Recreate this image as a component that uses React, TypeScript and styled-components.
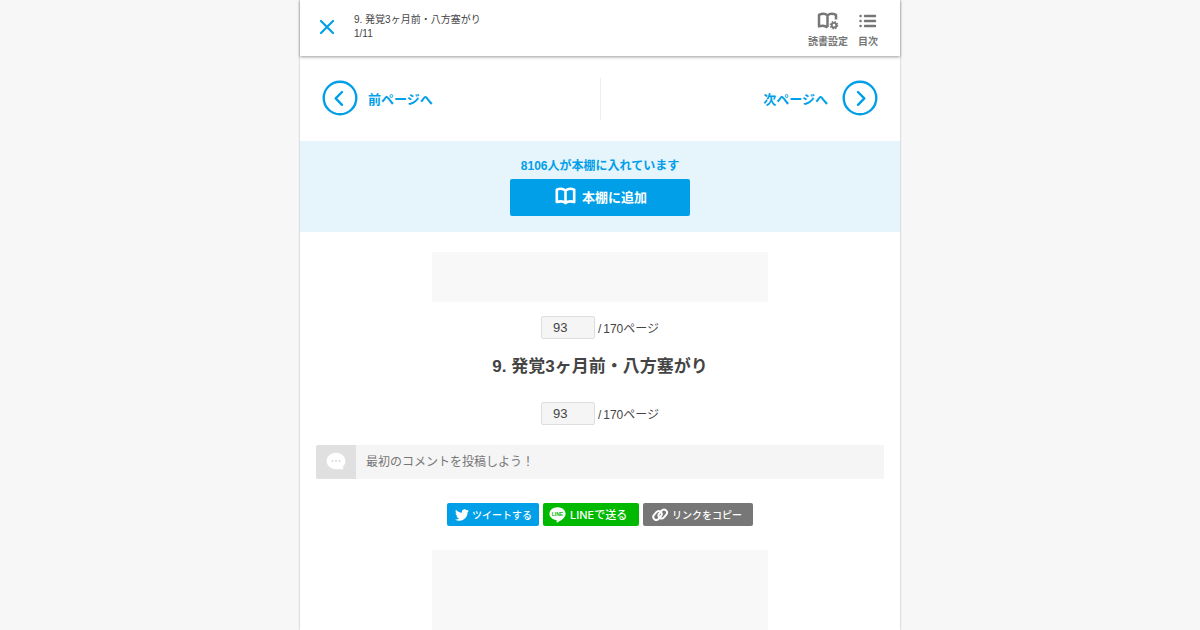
import React from "react";
import styled, { createGlobalStyle, css } from "styled-components";
import { FaTwitter } from "react-icons/fa";

const GlobalStyle = createGlobalStyle`
  *, *::before, *::after { box-sizing: border-box; }
  body {
    margin: 0;
    background: #f7f7f7;
    color: #444;
    font-family: "Liberation Sans", "Noto Sans CJK JP", sans-serif;
    font-size: 12px;
  }
  button, input { font-family: inherit; }
  svg { display: block; flex: none; }
`;

const Page = styled.div`
  display: flex;
  flex-direction: column;
  max-width: 600px;
  min-height: 100vh;
  margin: 0 auto;
  background: #fff;
  box-shadow: 0 0 2px rgba(0, 0, 0, 0.3);
`;

const Header = styled.header`
  display: flex;
  align-items: center;
  height: 56px;
  padding: 0 22px 2px 20px;
  background: #fff;
  box-shadow: 0 1px 3px rgba(0, 0, 0, 0.4);
`;

const PlainButton = styled.button`
  padding: 0;
  border: 0;
  background: none;
  cursor: pointer;
`;

const CloseButton = styled(PlainButton)`
  margin-right: 20px;
  color: #009fe8;
`;

const Chapter = styled.div`
  flex: 1;
  font-size: 10px;
  line-height: 14px;
`;

const Tools = styled.div`
  display: flex;
  gap: 10px;
  padding-top: 8px;
`;

const ToolButton = styled(PlainButton)`
  display: flex;
  flex-direction: column;
  align-items: center;
  gap: 4px;
  color: #777;
  font-size: 10px;
  font-weight: bold;
  line-height: 16px;
`;

const Pager = styled.nav`
  display: flex;
  align-items: center;
  height: 85px;
`;

const PagerLink = styled.a<{ $next?: boolean }>`
  display: flex;
  flex: 1;
  flex-direction: ${(p) => (p.$next ? "row-reverse" : "row")};
  align-items: center;
  gap: ${(p) => (p.$next ? 14 : 10)}px;
  height: 42px;
  padding: 0 22px;
  color: #009fe8;
  font-size: 13px;
  font-weight: bold;
  text-decoration: none;
  ${(p) => p.$next && css`border-left: 1px solid #eee;`}
  svg { margin-bottom: 2px; }
`;

const Shelf = styled.section`
  display: flex;
  flex-direction: column;
  align-items: center;
  gap: 3px;
  padding: 15px 0 16px;
  background: #e6f4fc;
`;

const ShelfCount = styled.p`
  margin: 0;
  color: #009fe8;
  font-weight: bold;
  line-height: 20px;
`;

const ShelfButton = styled.button`
  display: flex;
  align-items: center;
  justify-content: center;
  gap: 6px;
  width: 180px;
  height: 37px;
  padding: 0 0 3px 2px;
  border: 0;
  border-radius: 2px;
  background: #009fe8;
  color: #fff;
  font-size: 13px;
  font-weight: bold;
  cursor: pointer;
`;

const Main = styled.main`
  display: flex;
  flex: 1;
  flex-direction: column;
  align-items: center;
  padding-top: 20px;
`;

const AdSlot = styled.div<{ $fill?: boolean }>`
  width: 336px;
  max-width: 100%;
  background: #f8f8f8;
  ${(p) => (p.$fill ? css`flex: 1; min-height: 80px;` : css`height: 50px; margin-bottom: 14px;`)}
`;

const PageJump = styled.form`
  display: flex;
  align-items: center;
  gap: 3px;
  height: 23px;
`;

const PageInput = styled.input`
  width: 54px;
  height: 23px;
  padding: 0 11px;
  border: 1px solid #ddd;
  border-radius: 2px;
  background: #f5f5f5;
  color: #444;
  font-size: 13px;
`;

const PageTotal = styled.label`
  display: flex;
  gap: 2px;
  padding-top: 2px;
  line-height: 22px;
`;

const Title = styled.h1`
  margin: 15px 0 22px;
  font-size: 17px;
  line-height: 26px;
`;

const CommentBar = styled.a`
  display: flex;
  align-self: stretch;
  align-items: center;
  height: 34px;
  margin: 20px 16px 24px;
  border-radius: 2px;
  overflow: hidden;
  background: #f5f5f5;
  color: #777;
  line-height: 34px;
  text-decoration: none;
`;

const CommentIcon = styled.span`
  display: flex;
  align-items: center;
  justify-content: center;
  width: 40px;
  height: 34px;
  padding-bottom: 2px;
  margin-right: 10px;
  background: #e0e0e0;
`;

const CommentPrompt = styled.span`
  height: 34px;
`;

const ShareList = styled.div`
  display: flex;
  gap: 4px;
  margin-bottom: 24px;
`;

const ShareButton = styled.button<{ $color: string; $width: number; $line?: boolean }>`
  display: flex;
  align-items: center;
  gap: ${(p) => (p.$line ? 4 : 3)}px;
  width: ${(p) => p.$width}px;
  height: 23px;
  padding: 0 0 0 ${(p) => (p.$line ? 6 : 8)}px;
  border: 0;
  border-radius: 2px;
  background: ${(p) => p.$color};
  color: #fff;
  font-family: Inter, "Noto Sans CJK JP", sans-serif;
  font-size: ${(p) => (p.$line ? 11 : 10)}px;
  font-weight: 500;
  line-height: 22px;
  white-space: nowrap;
  cursor: pointer;
`;

const CloseIcon = () => (
  <svg width="14" height="14" viewBox="0 0 14 14" stroke="currentColor" strokeWidth="2.2" strokeLinecap="round">
    <path d="M1 1L13 13M13 1L1 13" />
  </svg>
);

const BookIcon = () => (
  <svg width="21" height="18" viewBox="0 0 21 18" fill="none" stroke="currentColor" strokeWidth="2.6" strokeLinejoin="round">
    <path d="M10.5 3.6C8.5 1.7 5 1.3 1.8 2.6V15C5 14 8.5 14.2 10.5 16.2C12.5 14.2 16 14 19.2 15V2.6C16 1.3 12.5 1.7 10.5 3.6ZM10.5 3.6V16" />
  </svg>
);

const BookGearIcon = () => (
  <svg width="22" height="18" viewBox="0 0 22 18" fill="none" stroke="currentColor">
    <path strokeWidth="2.5" strokeLinejoin="round" d="M10.5 15.6C8.5 13.8 5 13.4 2 14.4V2.8C5 1.3 8.5 1.5 10.5 3.4C12.5 1.5 16 1.3 19 2.8V7.5M10.5 3.4V15" />
    <circle cx="17" cy="13.2" r="2.3" strokeWidth="1.9" />
    <circle cx="17" cy="13.2" r="3.6" strokeWidth="1.4" strokeDasharray="1.5 1.33" />
  </svg>
);

const ListIcon = () => (
  <svg width="18" height="18" viewBox="0 0 18 18" stroke="currentColor" strokeWidth="2.5" strokeLinecap="round">
    <path d="M1.500 4H1.600M1.500 9H1.600M1.500 14H1.600M6 4H16M6 9H16M6 14H16" />
  </svg>
);

const CircleArrow = ({ next }: { next?: boolean }) => (
  <svg width="36" height="36" viewBox="0 0 36 36" fill="none" stroke="currentColor" strokeWidth="2.4">
    <circle cx="18" cy="18" r="16.3" />
    <path strokeLinecap="round" strokeLinejoin="round" d={next ? "M16 12L22.3 18.4L16 24.8" : "M20 12L13.7 18.4L20 24.8"} />
  </svg>
);

const BubbleIcon = () => (
  <svg width="20" height="18" viewBox="0 0 20 18">
    <path fill="#fff" d="M10 .8C4.700 .8 .6 4.400 .6 9S4.700 17.200 10 17.200H16.600C17.500 17.200 17.500 16.400 17 15.800L16.700 14.800C18.400 13.400 19.400 11.400 19.400 9C19.400 4.400 15.300 .8 10 .8Z" />
    <g fill="#d8d8d8">
      <circle cx="6.5" cy="9" r="1" />
      <circle cx="10" cy="9" r="1" />
      <circle cx="13.5" cy="9" r="1" />
    </g>
  </svg>
);

const LineIcon = () => (
  <svg width="17" height="16" viewBox="0 0 17 16">
    <path fill="#fff" d="M8.500 .3C3.900 .3 .4 3.200 .4 6.700C.4 9.900 3.300 12.400 7.100 13C7.900 13.200 7.700 13.900 7.500 15.100C7.500 15.600 7.900 15.700 8.400 15.400C11 14 16.600 10.900 16.600 6.700C16.600 3.200 13.100 .3 8.500 .3Z" />
    <text x="8.5" y="8.6" textAnchor="middle" fill="#00b900" fontFamily="Liberation Sans, sans-serif" fontSize="5" fontWeight="bold">LINE</text>
  </svg>
);

const ChainIcon = () => (
  <svg width="18" height="16" viewBox="0 0 18 16" fill="none" stroke="#fff" strokeWidth="2">
    <rect x="-4.8" y="-3" width="9.6" height="6" rx="3" transform="translate(6.5 8.5) rotate(-50)" />
    <rect x="-4.8" y="-3" width="9.6" height="6" rx="3" transform="translate(11.8 7) rotate(-50)" />
  </svg>
);

const PageSelector = ({ id }: { id: string }) => (
  <PageJump onSubmit={(e) => e.preventDefault()}>
    <PageInput id={id} defaultValue="93" inputMode="numeric" />
    <PageTotal htmlFor={id}>
      <span>/</span>
      <span>170ページ</span>
    </PageTotal>
  </PageJump>
);

export default function App() {
  return (
    <>
      <GlobalStyle />
      <Page>
        <Header>
          <CloseButton type="button" aria-label="閉じる"><CloseIcon /></CloseButton>
          <Chapter>
            <div>9. 発覚3ヶ月前・八方塞がり</div>
            <div>1/11</div>
          </Chapter>
          <Tools>
            <ToolButton type="button"><BookGearIcon />読書設定</ToolButton>
            <ToolButton type="button"><ListIcon />目次</ToolButton>
          </Tools>
        </Header>
        <Pager>
          <PagerLink href="#prev"><CircleArrow />前ページへ</PagerLink>
          <PagerLink href="#next" $next><CircleArrow next />次ページへ</PagerLink>
        </Pager>
        <Shelf>
          <ShelfCount>8106人が本棚に入れています</ShelfCount>
          <ShelfButton type="button"><BookIcon />本棚に追加</ShelfButton>
        </Shelf>
        <Main>
          <AdSlot />
          <PageSelector id="page-top" />
          <Title>9. 発覚3ヶ月前・八方塞がり</Title>
          <PageSelector id="page-bottom" />
          <CommentBar href="#comment">
            <CommentIcon><BubbleIcon /></CommentIcon>
            <CommentPrompt>最初のコメントを投稿しよう！</CommentPrompt>
          </CommentBar>
          <ShareList>
            <ShareButton type="button" $color="#009fe8" $width={92}><FaTwitter size={14} />ツイートする</ShareButton>
            <ShareButton type="button" $color="#00b900" $width={96} $line><LineIcon />LINEで送る</ShareButton>
            <ShareButton type="button" $color="#777" $width={110}><ChainIcon />リンクをコピー</ShareButton>
          </ShareList>
          <AdSlot $fill />
        </Main>
      </Page>
    </>
  );
}
